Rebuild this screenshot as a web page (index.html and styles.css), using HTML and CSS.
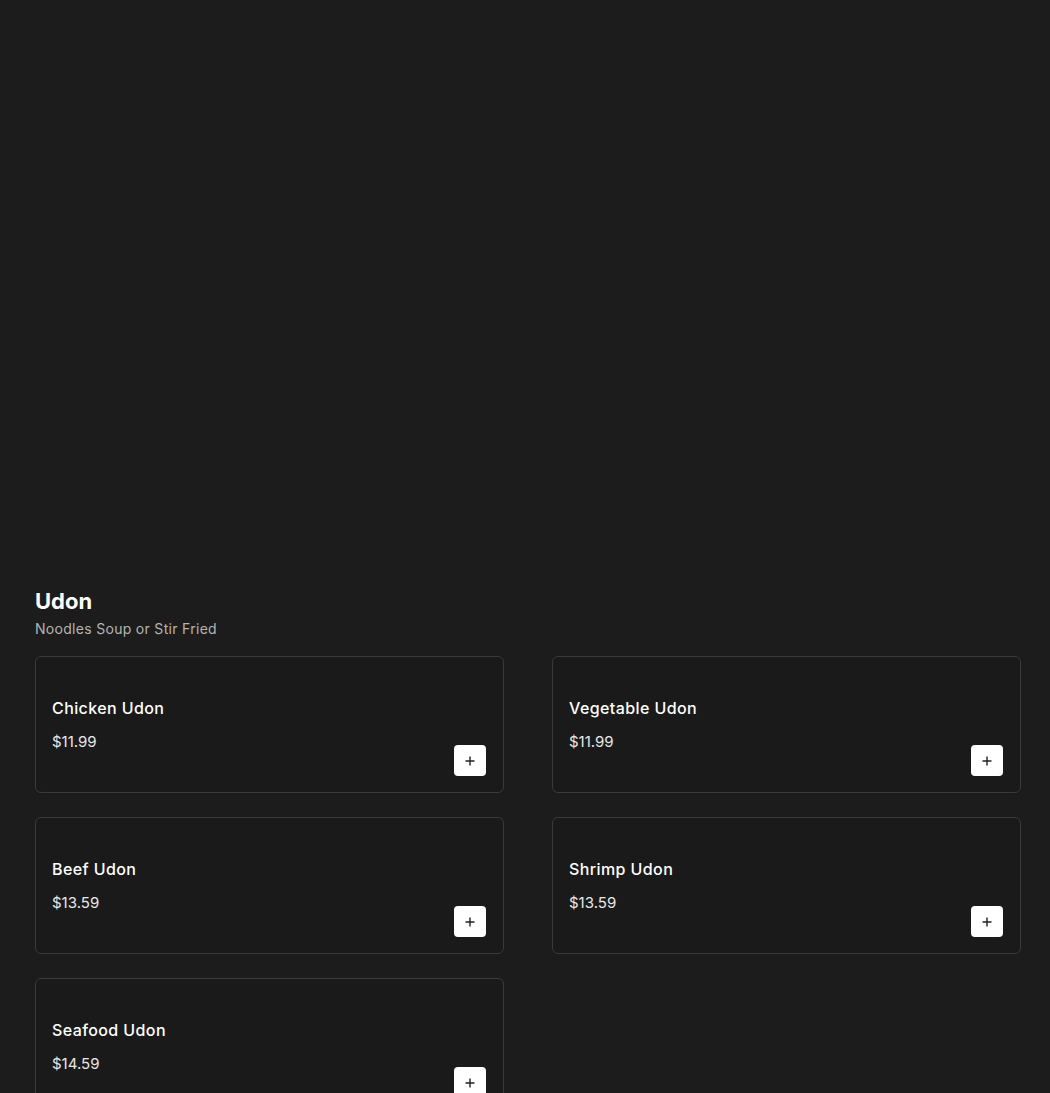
FILE: index.html
```html
<!DOCTYPE html>
<html>
<head>
<meta charset="utf-8">
<link rel="stylesheet" href="styles.css">
</head>
<body>
<main class="page">
  <div class="hero"></div>
  <section class="category">
    <h2 class="cat-title">Udon</h2>
    <p class="cat-sub">Noodles Soup or Stir Fried</p>
    <div class="grid">
      <div class="card">
        <div class="info"><div class="name">Chicken Udon</div><div class="price">$11.99</div></div>
        <button class="add"><svg viewBox="0 0 12 12" width="12" height="12"><path d="M6 1.5v9M1.5 6h9" stroke="#222" stroke-width="1.4" fill="none"/></svg></button>
      </div>
      <div class="card">
        <div class="info"><div class="name">Vegetable Udon</div><div class="price">$11.99</div></div>
        <button class="add"><svg viewBox="0 0 12 12" width="12" height="12"><path d="M6 1.5v9M1.5 6h9" stroke="#222" stroke-width="1.4" fill="none"/></svg></button>
      </div>
      <div class="card">
        <div class="info"><div class="name">Beef Udon</div><div class="price">$13.59</div></div>
        <button class="add"><svg viewBox="0 0 12 12" width="12" height="12"><path d="M6 1.5v9M1.5 6h9" stroke="#222" stroke-width="1.4" fill="none"/></svg></button>
      </div>
      <div class="card">
        <div class="info"><div class="name">Shrimp Udon</div><div class="price">$13.59</div></div>
        <button class="add"><svg viewBox="0 0 12 12" width="12" height="12"><path d="M6 1.5v9M1.5 6h9" stroke="#222" stroke-width="1.4" fill="none"/></svg></button>
      </div>
      <div class="card">
        <div class="info"><div class="name">Seafood Udon</div><div class="price">$14.59</div></div>
        <button class="add"><svg viewBox="0 0 12 12" width="12" height="12"><path d="M6 1.5v9M1.5 6h9" stroke="#222" stroke-width="1.4" fill="none"/></svg></button>
      </div>
    </div>
  </section>
</main>
</body>
</html>
```
FILE: styles.css
```css
html, body {
  margin: 0;
  padding: 0;
  background: #1c1c1c;
  color: #fff;
  font-family: Inter, "Noto Sans", sans-serif;
}
.page {
  width: 986px;
  margin-left: 35px;
}
.hero {
  height: 587px;
}
.cat-title {
  margin: 0;
  font-size: 22px;
  line-height: 28px;
  font-weight: 700;
  color: #fff;
}
.cat-sub {
  margin: 4px 0 0;
  font-size: 14px;
  line-height: 20px;
  letter-spacing: 0.3px;
  color: #b4b4b4;
}
.grid {
  margin-top: 17px;
  display: grid;
  grid-template-columns: 1fr 1fr;
  column-gap: 48px;
  row-gap: 24px;
}
.card {
  height: 137px;
  box-sizing: border-box;
  border: 1px solid #3a3a3a;
  border-radius: 6px;
  background: #1a1a1a;
  display: flex;
  padding: 0 17px 16px 16px;
}
.info {
  flex: 1;
  padding-top: 41px;
}
.name {
  font-size: 16px;
  line-height: 20px;
  font-weight: 500;
  letter-spacing: 0.4px;
  color: #fff;
}
.price {
  margin-top: 14px;
  font-size: 15px;
  line-height: 20px;
  color: #e8e8e8;
}
.add {
  align-self: flex-end;
  width: 32px;
  height: 31px;
  border: none;
  border-radius: 4px;
  background: #fff;
  padding: 0;
  display: flex;
  align-items: center;
  justify-content: center;
}
```
